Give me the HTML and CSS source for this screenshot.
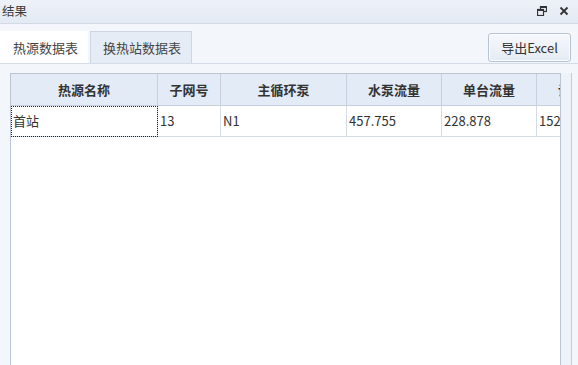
FILE: index.html
```html
<!DOCTYPE html>
<html lang="zh-CN">
<head>
  <meta charset="UTF-8" />
  <title>结果</title>
  <link rel="stylesheet" href="styles.css">
</head>
<body>
  <div class="window">
    <div class="titlebar">
      <span class="title">结果</span>
      <div class="title-icons">
        <svg class="icon" width="10" height="10" viewBox="0 0 10 10" aria-hidden="true">
          <rect x="3.5" y="0.5" width="6" height="5" fill="none" stroke="#333" stroke-width="1.2"/>
          <rect x="0.5" y="3.5" width="6" height="6" fill="#e8edf5" stroke="#333" stroke-width="1.2"/>
          <rect x="3.5" y="0.5" width="6" height="1.5" fill="#333"/>
          <rect x="0.5" y="3.5" width="6" height="1.5" fill="#333"/>
        </svg>
        <svg class="icon" width="10" height="10" viewBox="0 0 10 10" aria-hidden="true">
          <path d="M1.5 1.5 L8.5 8.5 M8.5 1.5 L1.5 8.5" stroke="#333" stroke-width="1.8"/>
        </svg>
      </div>
    </div>

    <div class="content">
      <div class="tabbar">
        <div class="tabs">
          <div class="tab active">热源数据表</div>
          <div class="tab">换热站数据表</div>
        </div>
        <button class="export-btn">导出Excel</button>
      </div>

      <div class="panel">
        <div class="grid">
          <div class="row header">
            <div class="cell c1">热源名称</div>
            <div class="cell c2">子网号</div>
            <div class="cell c3">主循环泵</div>
            <div class="cell c4">水泵流量</div>
            <div class="cell c5">单台流量</div>
            <div class="cell c6">设计扬程</div>
          </div>
          <div class="row data">
            <div class="cell c1 focused">首站</div>
            <div class="cell c2">13</div>
            <div class="cell c3">N1</div>
            <div class="cell c4">457.755</div>
            <div class="cell c5">228.878</div>
            <div class="cell c6">152.000</div>
          </div>
        </div>
        <div class="edge"></div>
      </div>
    </div>
  </div>
</body>
</html>
```

FILE: styles.css
```css
* {
  margin: 0;
  padding: 0;
  box-sizing: border-box;
}

body {
  font-family: "Noto Sans CJK SC", "Noto Sans", sans-serif;
  font-size: 13px;
  color: #333;
  background: #f4f6fb;
  width: 578px;
  height: 365px;
  overflow: hidden;
}

.window {
  display: flex;
  flex-direction: column;
  height: 365px;
}

.titlebar {
  height: 24px;
  display: flex;
  align-items: center;
  justify-content: space-between;
  padding: 0 9px 1px 2px;
  background: linear-gradient(#edf1f8, #e4eaf3);
  border-bottom: 1px solid #d3dae5;
}

.title {
  font-size: 12.5px;
  color: #3a3a3a;
  line-height: 1;
}

.title-icons {
  display: flex;
  gap: 12px;
  align-items: center;
}

.content {
  flex: 1;
  display: flex;
  flex-direction: column;
  background: #f3f6fb;
}

.tabbar {
  display: flex;
  justify-content: space-between;
  align-items: flex-start;
  padding: 7px 7px 0 0;
  height: 39px;
}

.tabs {
  display: flex;
  gap: 2px;
}

.tab {
  height: 32px;
  line-height: 31px;
  padding: 0 0 0 12px;
  white-space: nowrap;
  color: #444;
  border: 1px solid #cdd6e1;
  border-bottom: none;
  background: #e6ecf5;
}

.tab.active {
  width: 88px;
  padding-left: 12px;
  background: #fff;
  border-color: #fff;
}

.tab:not(.active) {
  width: 102px;
}

.export-btn {
  margin-top: 2px;
  width: 83px;
  height: 29px;
  font-family: inherit;
  font-size: 13px;
  color: #333;
  border: 1px solid #b8c3d1;
  border-radius: 3px;
  background: linear-gradient(#f6f8fc, #e5ebf4);
  box-shadow: inset 0 0 0 1px #fafcff;
}

.panel {
  flex: 1;
  display: flex;
  padding: 9px 6px 0 10px;
  border-top: 1px solid #d4dce7;
}

.grid {
  width: 551px;
  background: #fff;
  border: 1px solid #bcc5d1;
  border-bottom: none;
  overflow: hidden;
}

.edge {
  width: 11px;
  background: #eef3f9;
  border-right: 1px solid #c4ccd7;
}

.row {
  display: flex;
  width: 640px;
}

.cell {
  flex: none;
  border-right: 1px solid #d4dbe4;
  border-bottom: 1px solid #d4dbe4;
  white-space: nowrap;
  overflow: hidden;
}

.header .cell {
  height: 32px;
  line-height: 31px;
  text-align: center;
  font-weight: bold;
  color: #333;
  background: #e3ebf6;
  border-right-color: #c7d0dc;
  border-bottom-color: #c7d0dc;
}

.data .cell {
  height: 31px;
  line-height: 30px;
  padding-left: 2px;
  color: #333;
}

.c1 { width: 147px; }
.c2 { width: 63px; }
.c3 { width: 126px; }
.c4 { width: 95px; }
.c5 { width: 95px; }
.c6 { width: 95px; }

.data .cell.focused {
  outline: 1px dotted #222;
  outline-offset: -1px;
}
```
